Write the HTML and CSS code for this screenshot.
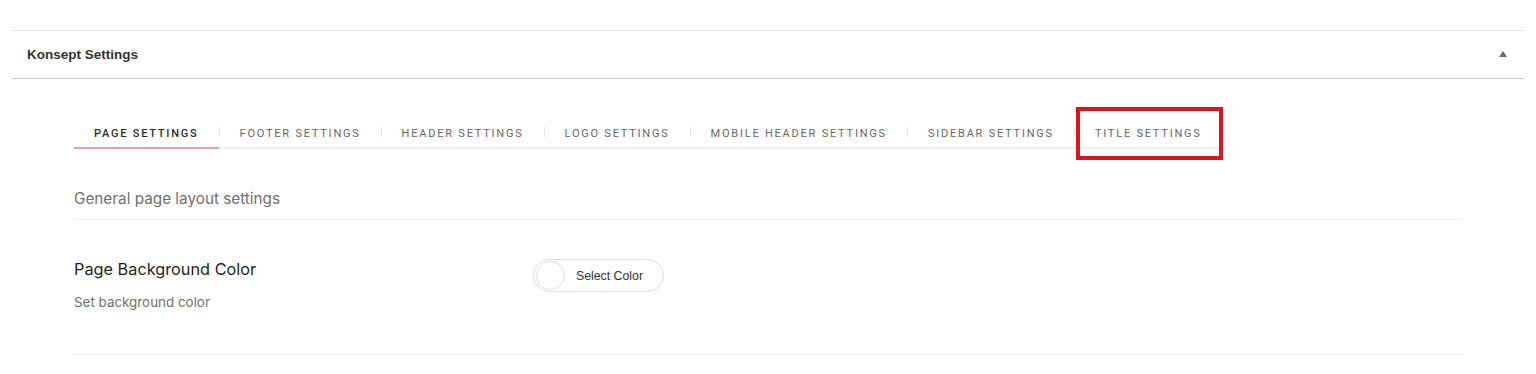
FILE: index.html
```html
<!DOCTYPE html>
<html lang="en">
<head>
<meta charset="utf-8">
<title>Konsept Settings</title>
<link rel="stylesheet" href="styles.css">
</head>
<body>
<div class="page">
  <section class="panel">
    <header class="panel-header">
      <h2 class="panel-title">Konsept Settings</h2>
      <span class="toggle-arrow"></span>
    </header>
    <div class="panel-body">
      <nav class="tabs">
        <span class="tab active">Page Settings</span>
        <span class="sep"></span>
        <span class="tab">Footer Settings</span>
        <span class="sep"></span>
        <span class="tab">Header Settings</span>
        <span class="sep"></span>
        <span class="tab">Logo Settings</span>
        <span class="sep"></span>
        <span class="tab">Mobile Header Settings</span>
        <span class="sep"></span>
        <span class="tab">Sidebar Settings</span>
        <span class="sep"></span>
        <span class="tab marked">Title Settings<span class="highlight"></span></span>
      </nav>
      <div class="section-title">General page layout settings</div>
      <div class="field">
        <div class="field-label">
          <div class="field-name">Page Background Color</div>
          <div class="field-desc">Set background color</div>
        </div>
        <button class="color-btn" type="button"><span class="swatch"></span><span class="color-text">Select Color</span></button>
      </div>
    </div>
  </section>
</div>
</body>
</html>
```
FILE: styles.css
```css
* { box-sizing: border-box; }
html, body { margin: 0; padding: 0; background: #fff; }
body { font-family: Inter, "Liberation Sans", Arial, sans-serif; color: #333; }

.page { padding: 30px 12px 0; }

.panel { border-top: 1px solid #e2e2e2; }

.panel-header {
  height: 48px;
  border-bottom: 1px solid #c9c9c9;
  display: flex;
  align-items: center;
  justify-content: space-between;
  padding: 0 17px 0 15px;
}
.panel-title {
  margin: 0;
  font-family: "Liberation Sans", Arial, sans-serif;
  font-size: 13.5px;
  font-weight: 700;
  color: #333;
}
.toggle-arrow {
  width: 0; height: 0;
  border-left: 4px solid transparent;
  border-right: 4px solid transparent;
  border-bottom: 6px solid #6e6e6e;
  margin-top: -2px;
}

.panel-body { padding: 0 62px; }

.tabs {
  margin-top: 40px;
  display: inline-flex;
  align-items: center;
  border-bottom: 2px solid #f0f0f0;
  font-family: Roboto, "Liberation Sans", sans-serif;
}
.tab {
  position: relative;
  padding: 8px 20px 6px;
  font-size: 11px;
  line-height: 14px;
  letter-spacing: 1.78px;
  text-transform: uppercase;
  color: #666;
  white-space: nowrap;
  border-bottom: 2px solid transparent;
  margin-bottom: -2px;
}
.tab.active { color: #2c2c2c; border-bottom-color: #e3a3ac; font-weight: 500; }
.sep { width: 1px; height: 10px; background: #e4e4e4; margin-top: -2px; }

.highlight {
  position: absolute;
  top: -12px; bottom: -13px; left: 1px; right: -1px;
  border: 4px solid #e0121a;
}

.section-title {
  margin-top: 40px;
  font-size: 15.3px;
  line-height: 20px;
  color: #707070;
  padding-bottom: 10px;
  border-bottom: 1px solid #ececec;
}

.field {
  display: flex;
  align-items: flex-start;
  padding: 39px 0 43px;
  border-bottom: 1px solid #ececec;
}
.field-label { width: 459px; }
.field-name { font-size: 16.3px; line-height: 20px; color: #1f1f1f; }
.field-desc { margin-top: 14px; font-size: 13.4px; line-height: 18px; color: #707070; }

.color-btn {
  display: flex;
  align-items: center;
  height: 33px;
  padding: 0 20px 0 2px;
  background: #fff;
  border: 1px solid #dcdcdc;
  border-radius: 17px;
  font-family: "Liberation Sans", Arial, sans-serif;
  font-size: 12.3px;
  color: #333;
  cursor: pointer;
}
.swatch {
  width: 29px; height: 29px;
  border-radius: 50%;
  border: 1px solid #e0e0e0;
  background: #fff;
}
.color-text { margin-left: 11px; }
```
